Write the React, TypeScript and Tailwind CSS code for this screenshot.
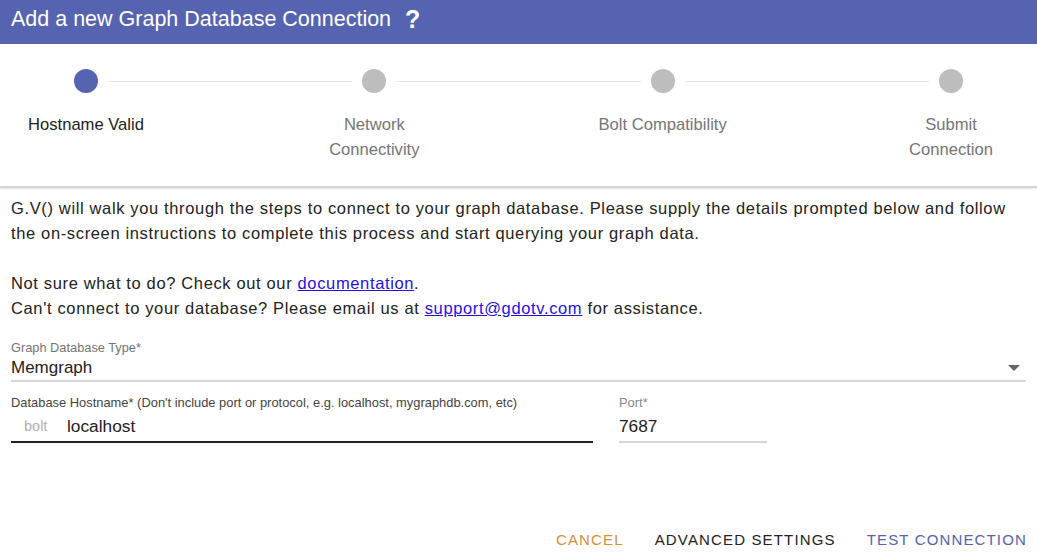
const STEPS = [
  { label: ['Hostname Valid'], active: true },
  { label: ['Network', 'Connectivity'], active: false },
  { label: ['Bolt Compatibility'], active: false },
  { label: ['Submit', 'Connection'], active: false },
];

export default function App() {
  return (
    <div className="w-[1037px] h-[559px] bg-white overflow-hidden font-['Liberation_Sans',Arial,sans-serif] text-[#222]">
      {/* Title bar */}
      <div className="h-[44px] bg-[#5563b1] flex items-center px-[11px] pb-[5px] text-white">
        <span className="text-[21.5px] leading-none">Add a new Graph Database Connection</span>
        <span className="ml-[14px] text-[25px] font-bold leading-none">?</span>
      </div>

      {/* Stepper */}
      <div className="pt-[25px] pb-[24px] border-b-2 border-[#d4d4d4] shadow-[0_1px_2px_rgba(0,0,0,0.12)]">
        <div className="flex items-center px-[74px]">
          {STEPS.map((s, i) => (
            <div key={i} className={i < STEPS.length - 1 ? 'flex items-center flex-1' : 'flex items-center'}>
              <div className={`w-[24px] h-[24px] rounded-full flex-shrink-0 ${s.active ? 'bg-[#5563b1]' : 'bg-[#bdbdbd]'}`} />
              {i < STEPS.length - 1 && <div className="flex-1 h-px bg-[#e8e8e8] mx-[10px]" />}
            </div>
          ))}
        </div>
        <div className="flex justify-between mt-[19px]">
          {STEPS.map((s, i) => (
            <div key={i} className={`w-[172px] text-center text-[16.6px] leading-[25px] ${s.active ? 'text-[#222]' : 'text-[#757575]'}`}>
              {s.label.map(l => <div key={l}>{l}</div>)}
            </div>
          ))}
        </div>
      </div>

      {/* Intro text */}
      <div className="px-[11px] pt-[8px] text-[16.5px] leading-[25px] tracking-[0.64px] text-[#222]">
        <p>
          G.V() will walk you through the steps to connect to your graph database. Please supply the details prompted below and follow
          the on-screen instructions to complete this process and start querying your graph data.
        </p>
        <p className="mt-[25px]">
          Not sure what to do? Check out our <a href="#" className="text-[#1f0fe6] underline">documentation</a>.
        </p>
        <p>
          Can't connect to your database? Please email us at <a href="#" className="text-[#1f0fe6] underline">support@gdotv.com</a> for assistance.
        </p>
      </div>

      {/* Form */}
      <div className="px-[11px] mt-[19px]">
        <div className="border-b-2 border-[#d6d6d6]">
          <div className="text-[12.8px] leading-[16px] text-[#757575]">Graph Database Type*</div>
          <div className="flex items-center justify-between h-[24px]">
            <span className="text-[17px] text-[#222]">Memgraph</span>
            <svg width="12" height="6" viewBox="0 0 12 6" className="mr-[6px]">
              <path d="M0 0h12L6 6z" fill="#666" />
            </svg>
          </div>
        </div>

        <div className="flex gap-[26px] mt-[13px]">
          <div className="w-[582px]">
            <div className="text-[12.9px] leading-[16px] text-[#444]">Database Hostname* (Don't include port or protocol, e.g. localhost, mygraphdb.com, etc)</div>
            <div className="flex items-center h-[30px] mt-[2px] border-b-2 border-[#222]">
              <span className="pl-[13px] w-[56px] text-[14.5px] text-[#b0b0b0]">bolt</span>
              <span className="text-[17.3px] text-[#222]">localhost</span>
            </div>
          </div>
          <div className="w-[148px]">
            <div className="text-[12.9px] leading-[16px] text-[#888]">Port*</div>
            <div className="flex items-center h-[30px] mt-[2px] border-b-2 border-[#d6d6d6]">
              <span className="text-[17.3px] text-[#222]">7687</span>
            </div>
          </div>
        </div>
      </div>

      {/* Actions */}
      <div className="flex justify-end gap-[31px] pr-[10px] mt-[86px] text-[15px] tracking-[1.15px]">
        <button className="text-[#d4903a]">CANCEL</button>
        <button className="text-[#222]">ADVANCED SETTINGS</button>
        <button className="text-[#5563b1]">TEST CONNECTION</button>
      </div>
    </div>
  );
}
